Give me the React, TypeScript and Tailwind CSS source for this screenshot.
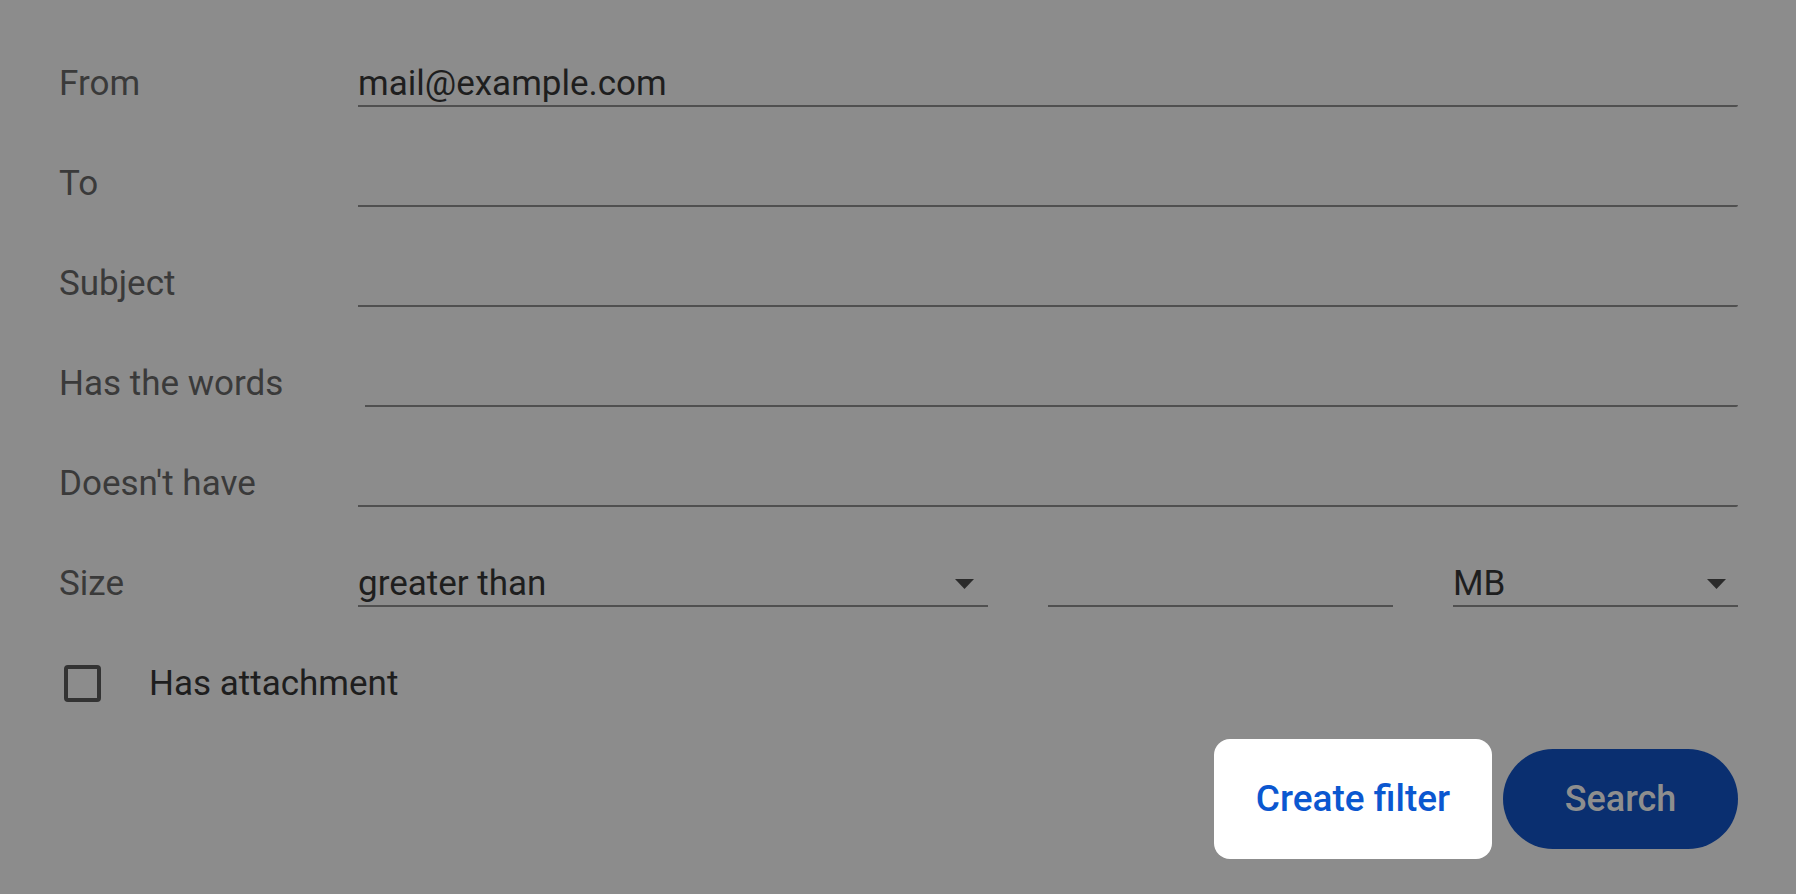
import { useState } from "react";

const rows = [
    { label: "From", value: "mail@example.com" },
    { label: "To", value: "" },
    { label: "Subject", value: "" },
    { label: "Has the words", value: "", offset: true },
    { label: "Doesn't have", value: "" },
];

function Caret() {
    return (
        <svg width="19" height="10" viewBox="0 0 19 10" className="shrink-0">
            <path d="M0 0 L19 0 L9.5 10 Z" fill="#2b2b2b" />
        </svg>
    );
}

export default function App() {
    const [checked, setChecked] = useState(false);

    return (
        <div
            className="min-h-screen w-full bg-[#8c8c8c] pt-[7px] pl-[59px] pr-[58px] text-[35px]"
            style={{ fontFamily: "Roboto, 'Liberation Sans', sans-serif" }}
        >
            {rows.map((row) => (
                <div key={row.label} className="flex h-[100px] items-end">
                    <div className="w-[299px] shrink-0 pb-[2px] leading-[42px] text-[#3a3a3a]">
                        {row.label}
                    </div>
                    <div
                        className={
                            "flex-1 border-b-2 border-[#505050] leading-[42px] text-[#1e1e1e] rounded-br-[2px] " +
                            (row.offset ? "ml-[7px]" : "")
                        }
                    >
                        {row.value || "\u00a0"}
                    </div>
                </div>
            ))}

            {/* size row */}
            <div className="flex h-[100px] items-end">
                <div className="w-[299px] shrink-0 pb-[2px] leading-[42px] text-[#3a3a3a]">Size</div>
                <div className="flex flex-1 items-end gap-[60px]">
                    <div className="flex w-[630px] items-center justify-between border-b-2 border-[#505050] pr-[14px] leading-[42px] text-[#1e1e1e]">
                        <span>greater than</span>
                        <Caret />
                    </div>
                    <div className="w-[345px] border-b-2 border-[#505050] leading-[42px]">{"\u00a0"}</div>
                    <div className="flex flex-1 items-center justify-between border-b-2 border-[#505050] pr-[12px] leading-[42px] text-[#1e1e1e]">
                        <span>MB</span>
                        <Caret />
                    </div>
                </div>
            </div>

            {/* attachment */}
            <div className="mt-[58px] flex h-[37px] items-center pl-[5px]">
                <button
                    onClick={() => setChecked(!checked)}
                    className="h-[37px] w-[37px] shrink-0 rounded-[4px] border-4 border-[#333333]"
                />
                <span className="ml-[48px] leading-[42px] text-[#1e1e1e]">Has attachment</span>
            </div>

            {/* actions */}
            <div className="mt-[37px] flex items-center justify-end gap-[11px]">
                <button className="flex h-[120px] w-[278px] items-center justify-center rounded-[16px] bg-white text-[37px] font-medium text-[#0b57d0]">
                    Create filter
                </button>
                <button className="flex h-[100px] w-[235px] items-center justify-center rounded-full bg-[#0a2f70] text-[36px] font-medium text-[#8e8e8e]">
                    Search
                </button>
            </div>
        </div>
    );
}
